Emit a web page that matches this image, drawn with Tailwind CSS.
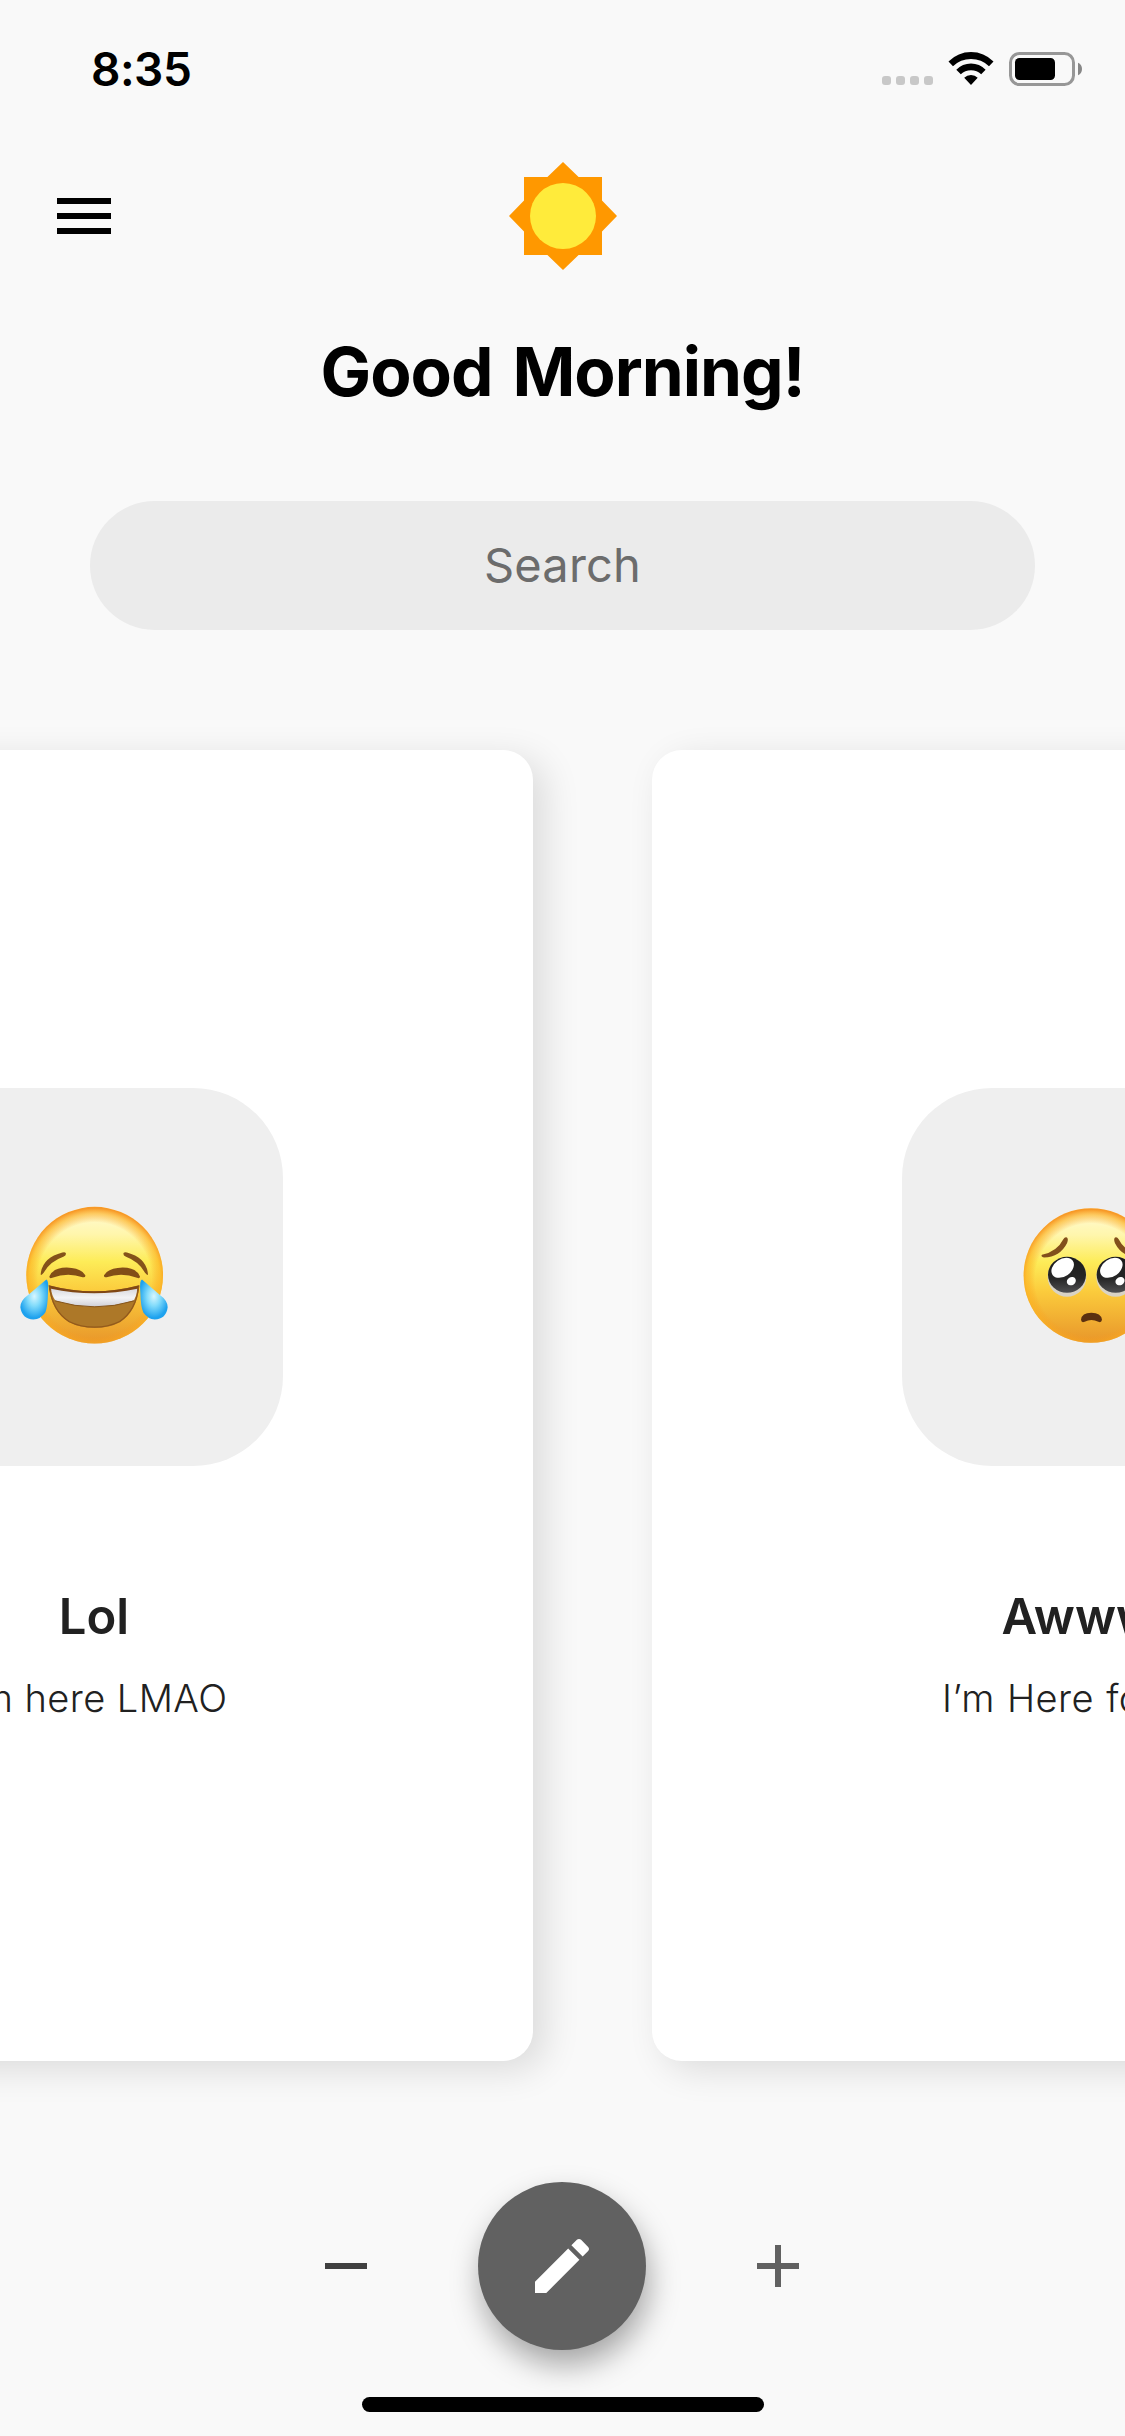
<!DOCTYPE html>
<html lang="en">
<head>
<meta charset="utf-8">
<title>Good Morning</title>
<script src="https://cdn.jsdelivr.net/npm/@tailwindcss/browser@4"></script>
</head>
<body class="bg-[#f9f9f9]">
<div class="flex h-[2436px] w-[1125px] flex-col overflow-hidden bg-[#f9f9f9] font-['Inter',sans-serif] text-black">

  <!-- Status bar -->
  <div class="flex h-[138px] shrink-0 items-center justify-between pr-[43px] pl-[91px]">
    <div class="text-[46px] leading-none font-[560] tracking-[-0.5px]">8:35</div>
    <svg class="h-[36px] w-[200px]" viewBox="882 51 200 36">
      <g fill="#c8c8c8">
        <rect x="882" y="76" width="9" height="9" rx="3"/><rect x="896" y="76" width="9" height="9" rx="3"/>
        <rect x="910" y="76" width="9" height="9" rx="3"/><rect x="924" y="76" width="9" height="9" rx="3"/>
      </g>
      <path d="M948.5 61.5Q958 52 971 52T993.500 61.500L989 66.200Q981.500 59 971 59T953 66.200ZM956.300 69.800Q962.500 63.500 971 63.500T985.600 69.800L981.200 74.300Q977 70.200 971 70.200T960.800 74.300ZM964.200 77.800Q967 75 971 75T977.700 77.800L971 85Z"/>
      <rect x="1010.500" y="53.500" width="63" height="31" rx="9" fill="none" stroke="#979797" stroke-width="3"/>
      <rect x="1015" y="58" width="40" height="22" rx="4.500"/>
      <path d="M1078 62.800Q1082 64.500 1082 69T1078 75.200Z" fill="#878787"/>
    </svg>
  </div>

  <!-- Header -->
  <div class="mt-6 grid h-[108px] shrink-0 grid-cols-[1fr_108px_1fr] items-center pl-12">
    <svg class="size-[72px]" viewBox="0 0 24 24"><path d="M3 18h18v-2H3v2zm0-5h18v-2H3v2zm0-7v2h18V6H3z"/></svg>
    <svg class="-ml-6 size-[108px]" viewBox="0 0 36 36">
      <path fill="#ff9800" d="M18 0l5.200 5H31v7.800L36 18l-5 5.200V31h-7.800L18 36l-5.200-5H5v-7.800L0 18l5-5.200V5h7.800z"/>
      <circle cx="18" cy="18" r="11" fill="#ffeb3b"/>
    </svg>
  </div>

  <h1 class="mt-[60px] h-[84px] shrink-0 text-center text-[67.5px] leading-[84px] font-bold tracking-[-1px] [word-spacing:5px]">Good Morning!</h1>

  <!-- Search -->
  <div class="mx-[90px] mt-[87px] flex h-[129px] shrink-0 items-center justify-center rounded-full bg-[#ebebeb] text-[47px] font-[370] tracking-[0.2px] text-[#6c6c6c]">Search</div>

  <!-- Cards, scrolled between two items -->
  <div class="mt-[120px] ml-[-345px] flex h-[1311px] w-[1875px] shrink-0 gap-[119px]">
    <div class="flex w-[878px] shrink-0 flex-col items-center rounded-[30px] bg-white pt-[338px] text-[#212121] shadow-[12px_9px_36px_rgba(0,0,0,0.12)]">
      <div class="flex size-[378px] items-center justify-center rounded-[90px] bg-[#efefef]">
        <svg class="size-40" viewBox="42 49.500 480 480">
          <defs>
            <linearGradient id="face" x1="0" y1="0" x2="0" y2="1">
              <stop offset="0" stop-color="#fffbd8"/><stop offset=".2" stop-color="#fff6ac"/><stop offset=".4" stop-color="#fdec58"/><stop offset=".62" stop-color="#fbcb3c"/><stop offset="1" stop-color="#e8962a"/>
            </linearGradient>
            <radialGradient id="rim" cx=".5" cy=".53" r=".52">
              <stop offset=".8" stop-color="#fa9a1c" stop-opacity="0"/><stop offset=".92" stop-color="#fcae1e" stop-opacity=".6"/><stop offset="1" stop-color="#f7941e" stop-opacity=".95"/>
            </radialGradient>
            <linearGradient id="teeth" x1="0" y1="0" x2="0" y2="1"><stop offset="0" stop-color="#d9d9de"/><stop offset=".5" stop-color="#f3f3f5"/><stop offset="1" stop-color="#cfcfd6"/></linearGradient>
            <radialGradient id="tear" cx=".5" cy=".42" r=".6"><stop offset="0" stop-color="#d8f6ff"/><stop offset=".4" stop-color="#83dcfb"/><stop offset=".9" stop-color="#1ea2ee"/></radialGradient>
          </defs>
          <circle cx="284" cy="284" r="205" fill="url(#face)"/>
          <circle cx="284" cy="284" r="205" fill="url(#rim)"/>
          <path d="M122 282Q126 232 187 216Q198 213 198 220Q198 226 190 229Q150 243 131 277Q124 286 122 282ZM444 282Q440 232 381 216Q370 213 370 220Q370 226 378 229Q416 243 435 277Q442 286 444 282Z" fill="#84521a"/>
          <path d="M148 288Q158 262 200 261Q243 262 256 284Q257 292 248 290Q202 274 157 292Q148 295 148 288ZM420 288Q410 262 368 261Q325 262 312 284Q311 292 320 290Q366 274 411 292Q420 295 420 288Z" fill="#824e17"/>
          <path d="M146 314Q282 350 418 314Q411 392 360 425Q325 443 284 442Q240 442 207 425Q153 390 146 314Z" fill="#ad7828"/>
          <path d="M146 314Q282 350 418 314L416 329Q284 356 148 329Z" fill="#804715"/>
          <path d="M153 325Q282 352 412 325Q411 345 402 359Q284 397 166 360Q155 345 153 325Z" fill="url(#teeth)"/>
          <path d="M165 361Q284 397 403 361" fill="none" stroke="#85551d" stroke-width="3"/>
          <path d="M149 318Q156 390 207 423Q240 440 284 440Q325 440 359 423Q408 390 416 318" fill="none" stroke="#93591b" stroke-width="4"/>
          <path d="M139 297Q147 298 144 337Q143 379 136 396Q122 416 100 417Q66 415 61 380Q61 360 86 342Z" fill="url(#tear)"/>
          <path d="M426 297Q418 298 421 337Q422 379 430 396Q444 416 464 417Q499 415 503 380Q503 360 478 342Z" fill="url(#tear)"/>
        </svg>
      </div>
      <div class="mt-[119px] text-[49px] leading-[64px] font-semibold">Lol</div>
      <div class="mt-[24px] text-[38px] leading-[50px] font-light tracking-[0.45px] whitespace-nowrap">I’m here LMAO</div>
    </div>
    <div class="flex w-[878px] shrink-0 flex-col items-center rounded-[30px] bg-white pt-[338px] text-[#212121] shadow-[12px_9px_36px_rgba(0,0,0,0.12)]">
      <div class="flex size-[378px] items-center justify-center rounded-[90px] bg-[#efefef]">
        <svg class="size-40" viewBox="33 49.500 480 480">
          <defs>
            <linearGradient id="eye" x1="0" y1="0" x2="0" y2="1"><stop offset="0" stop-color="#1b1b1b"/><stop offset=".6" stop-color="#262626"/><stop offset="1" stop-color="#505052"/></linearGradient>
            <g id="pleadEye">
              <ellipse cx="201" cy="289" rx="58" ry="60" fill="#d9d3c4"/>
              <ellipse cx="201" cy="283" rx="57" ry="54" fill="url(#eye)"/>
              <ellipse cx="188" cy="262" rx="37" ry="26" transform="rotate(-35 188 262)" fill="#fff"/>
              <ellipse cx="214" cy="302" rx="14" ry="12" transform="rotate(-30 214 302)" fill="#fff"/>
            </g>
          </defs>
          <circle cx="273" cy="285" r="202" fill="url(#face)"/>
          <circle cx="273" cy="285" r="202" fill="url(#rim)"/>
          <path d="M126 223Q172 212 190 176Q195 168 201 171Q206 176 201 188Q180 229 132 231Q121 228 126 223Z" fill="#824f1c"/>
          <path d="M420 223Q374 212 356 176Q351 168 345 171Q340 176 345 188Q366 229 414 231Q425 228 420 223Z" fill="#824f1c"/>
          <use href="#pleadEye"/>
          <use href="#pleadEye" x="146"/>
          <path d="M243 418Q245 397 274 397Q303 397 306 418Q304 428 295 424Q274 413 254 424Q244 428 243 418Z" fill="#5c3010"/>
        </svg>
      </div>
      <div class="mt-[119px] w-[179px] text-[49px] leading-[64px] font-semibold whitespace-nowrap">Awwww</div>
      <div class="mt-[24px] w-[298px] text-[38px] leading-[50px] font-light tracking-[0.45px] whitespace-nowrap [word-spacing:1px]">I’m Here for you</div>
    </div>
  </div>

  <!-- Actions -->
  <div class="mt-[121px] flex h-[168px] w-[1124px] shrink-0 items-center justify-center gap-24">
    <svg class="size-[72px]" viewBox="0 0 24 24" fill="#404040"><path d="M19 13H5v-2h14v2z"/></svg>
    <div class="flex size-[168px] items-center justify-center rounded-full bg-[#616161] shadow-[3px_15px_30px_rgba(0,0,0,0.34)]">
      <svg class="size-[72px]" viewBox="0 0 24 24" fill="#fff"><path d="M3 17.250V21h3.750L17.810 9.940l-3.750-3.750L3 17.250zM20.710 7.040c.39-.39.39-1.020 0-1.410l-2.340-2.340c-.39-.39-1.020-.39-1.410 0l-1.830 1.830 3.750 3.750 1.830-1.830z"/></svg>
    </div>
    <svg class="size-[72px]" viewBox="0 0 24 24" fill="#616161"><path d="M19 13h-6v6h-2v-6H5v-2h6V5h2v6h6v2z"/></svg>
  </div>

  <!-- Home indicator -->
  <div class="mx-auto mt-[47px] h-[15px] w-[402px] shrink-0 rounded-full bg-black"></div>
</div>
</body>
</html>
